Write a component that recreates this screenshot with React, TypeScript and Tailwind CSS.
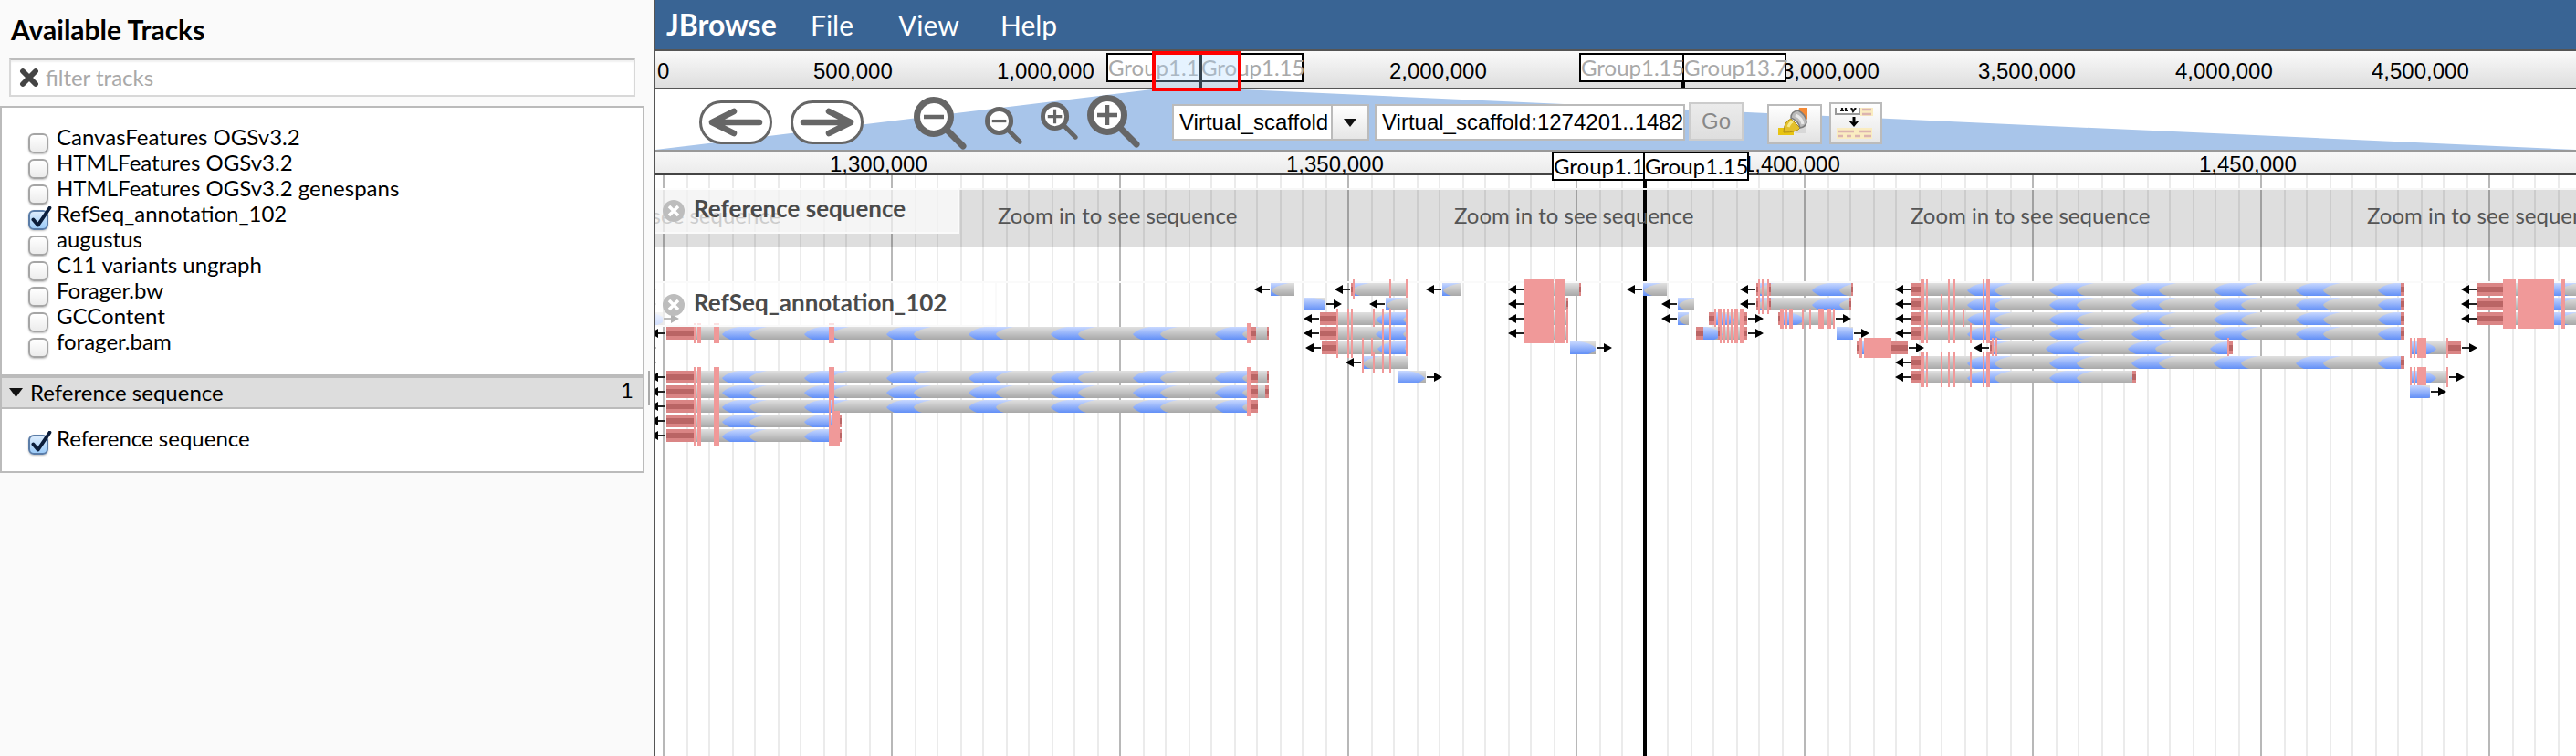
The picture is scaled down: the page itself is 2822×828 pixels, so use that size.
import React, { useState } from "react";
import { X } from "lucide-react";

type Span = [number, number];
type Feature = { row: number; x: Span; dir: "L" | "R"; utr?: Span[]; cds?: Span[] };

const ORIGIN = 718;
const TOP = 300;

const longCds = (...extra: Span[]): Span[] => [
  [760, 762], [764, 768], [782, 788], ...extra,
];
const midCds: Span[] = [[1464, 1466], [1476, 1478], [1480, 1482], [1514, 1516], [1522, 1524], [1540, 1542]];
const blockCds: Span[] = [[1670, 1702], [1704, 1714]];
const farCds: Span[] = [[2104, 2108], [2110, 2112], [2134, 2136], [2140, 2142], [2172, 2174], [2176, 2180]];
const tailCds: Span[] = [[2640, 2642], [2644, 2646], [2648, 2658], [2680, 2682]];
const edgeCds: Span[] = [[2742, 2756], [2758, 2798], [2806, 2810]];

const features: Feature[] = [
  { row: 0, x: [620, 701], dir: "R" },
  { row: 0, x: [1392, 1418], dir: "L" },
  { row: 0, x: [1480, 1542], dir: "L", utr: [[1480, 1482]], cds: [[1482, 1484], [1522, 1524], [1540, 1542]] },
  { row: 0, x: [1580, 1600], dir: "L" },
  { row: 0, x: [1670, 1732], dir: "L", cds: blockCds, utr: [[1730, 1732]] },
  { row: 0, x: [1800, 1826], dir: "L" },
  { row: 0, x: [1924, 2030], dir: "L", utr: [[1924, 1926], [1938, 1940], [2028, 2030]], cds: [[1926, 1928], [1930, 1932], [1936, 1938]] },
  { row: 0, x: [2094, 2634], dir: "L", utr: [[2094, 2104], [2630, 2634]], cds: farCds },
  { row: 0, x: [2714, 2840], dir: "L", utr: [[2714, 2742]], cds: edgeCds },
  { row: 1, x: [620, 701], dir: "R" },
  { row: 1, x: [1428, 1452], dir: "R" },
  { row: 1, x: [1518, 1542], dir: "L" },
  { row: 1, x: [1670, 1718], dir: "L", cds: blockCds, utr: [[1716, 1718]] },
  { row: 1, x: [1838, 1856], dir: "L" },
  { row: 1, x: [1924, 2028], dir: "L", utr: [[1924, 1926], [1938, 1940], [2026, 2028]], cds: [[1926, 1928], [1930, 1932], [1936, 1938]] },
  { row: 1, x: [2094, 2634], dir: "L", utr: [[2094, 2104], [2630, 2634]], cds: [...farCds, [2126, 2128]] },
  { row: 1, x: [2714, 2840], dir: "L", utr: [[2714, 2742]], cds: edgeCds },
  { row: 2, x: [700, 726], dir: "R" },
  { row: 2, x: [1446, 1542], dir: "L", utr: [[1446, 1464]], cds: [...midCds, [1504, 1506]] },
  { row: 2, x: [1670, 1718], dir: "L", cds: [...blockCds, [1716, 1718]] },
  { row: 2, x: [1838, 1850], dir: "L" },
  { row: 2, x: [1872, 1914], dir: "R", utr: [[1872, 1878], [1910, 1914]], cds: [[1878, 1880], [1882, 1886], [1888, 1890], [1892, 1894], [1896, 1898], [1900, 1904], [1906, 1910]] },
  { row: 2, x: [1948, 2010], dir: "R", utr: [[1948, 1950]], cds: [[1950, 1954], [1956, 1958], [1960, 1964], [1974, 1976], [1982, 1984], [1992, 1998], [2002, 2006], [2008, 2010]] },
  { row: 2, x: [2094, 2634], dir: "L", utr: [[2094, 2104], [2630, 2634]], cds: [...farCds, [2126, 2128], [2150, 2152]] },
  { row: 2, x: [2714, 2840], dir: "L", utr: [[2714, 2742]], cds: edgeCds },
  { row: 3, x: [730, 1390], dir: "L", utr: [[730, 760], [1370, 1376], [1388, 1390]], cds: longCds([908, 914], [1366, 1370]) },
  { row: 3, x: [1446, 1542], dir: "L", utr: [[1446, 1464]], cds: midCds },
  { row: 3, x: [1670, 1718], dir: "L", cds: [...blockCds, [1716, 1718]] },
  { row: 3, x: [1858, 1914], dir: "R", utr: [[1858, 1866], [1882, 1884], [1910, 1914]], cds: [[1884, 1886], [1888, 1890], [1892, 1894], [1896, 1898], [1900, 1904], [1906, 1910]] },
  { row: 3, x: [2012, 2030], dir: "R" },
  { row: 3, x: [2094, 2634], dir: "L", utr: [[2094, 2104], [2630, 2634]], cds: [...farCds, [2158, 2160]] },
  { row: 4, x: [620, 701], dir: "R" },
  { row: 4, x: [1448, 1542], dir: "L", utr: [[1448, 1464]], cds: [...midCds, [1492, 1494], [1502, 1504]] },
  { row: 4, x: [1720, 1748], dir: "R" },
  { row: 4, x: [2034, 2090], dir: "R", utr: [[2034, 2036], [2072, 2090]], cds: [[2036, 2040], [2042, 2072]] },
  { row: 4, x: [2180, 2446], dir: "L", utr: [[2180, 2182], [2442, 2446]], cds: [[2182, 2184], [2186, 2188], [2440, 2442]] },
  { row: 4, x: [2640, 2696], dir: "R", utr: [[2682, 2696]], cds: tailCds },
  { row: 5, x: [620, 701], dir: "R" },
  { row: 5, x: [1492, 1542], dir: "L", cds: [[1492, 1494], [1504, 1506], [1514, 1516], [1522, 1524]] },
  { row: 5, x: [2094, 2634], dir: "L", utr: [[2094, 2104], [2630, 2634]], cds: [...farCds, [2126, 2128], [2158, 2160]] },
  { row: 6, x: [730, 1390], dir: "L", utr: [[730, 760], [1370, 1378], [1388, 1390]], cds: longCds([908, 914], [1366, 1370]) },
  { row: 6, x: [1532, 1562], dir: "R" },
  { row: 6, x: [2094, 2340], dir: "L", utr: [[2094, 2104], [2336, 2340]], cds: [...farCds, [2126, 2128], [2158, 2160]] },
  { row: 6, x: [2640, 2682], dir: "R", cds: tailCds },
  { row: 7, x: [730, 1390], dir: "L", utr: [[730, 760], [1370, 1378], [1386, 1390]], cds: longCds([908, 914], [1366, 1370]) },
  { row: 7, x: [2640, 2662], dir: "R" },
  { row: 8, x: [730, 1378], dir: "L", utr: [[730, 760], [1370, 1378]], cds: longCds([908, 910], [912, 914], [1366, 1370]) },
  { row: 9, x: [730, 922], dir: "L", utr: [[730, 760], [920, 922]], cds: longCds([908, 910], [912, 920]) },
  { row: 10, x: [730, 922], dir: "L", utr: [[730, 760], [920, 922]], cds: longCds([908, 920]) },
];

function FeatureGlyph({ row, x: [a, b], dir, utr = [], cds = [] }: Feature) {
  const y = 310 + row * 16 - TOP;
  const left = a - ORIGIN;
  const right = b - ORIGIN;
  return (
    <g>
      <svg x={left} y={y} width={b - a} height={14} overflow="hidden">
        <rect width={b - a} height={14} fill={dir === "L" ? "url(#bodyLeft)" : "url(#bodyRight)"} />
      </svg>
      {dir === "L" ? (
        <use href="#arrow" transform={`translate(${left - 18} ${y + 7})`} />
      ) : (
        <use href="#arrow" transform={`translate(${right + 18} ${y + 7}) scale(-1 1)`} />
      )}
      <g transform={`translate(${-ORIGIN} 0)`}>
        {utr.map(([s, e]) => (
          <g key={s}>
            <rect x={s} y={y} width={e - s} height={14} fill="#da8585" />
            <rect x={s} y={y + 4} width={e - s} height={6} fill="#ba6565" />
          </g>
        ))}
        {cds.map(([s, e]) => (
          <rect key={s} x={s} y={y - 4} width={e - s} height={22} fill="#f09999" />
        ))}
      </g>
    </g>
  );
}

function ChevronStrip({ id, start, mirrored }: { id: string; start: number; mirrored?: boolean }) {
  const shape = "M0 8Q5 2 18 0H49Q33 3 30 8Q32 12 39 14H9Q2 11 0 8Z";
  return (
    <g id={id}>
      <rect width={720} height={14} fill="url(#gray)" />
      {Array.from({ length: 9 }, (_, k) => start + 90 * (k - 1)).map((x) => (
        <path key={x} d={shape} fill="url(#blue)" transform={`translate(${x} 0)${mirrored ? " scale(-1 1)" : ""}`} />
      ))}
    </g>
  );
}

function FeatureCanvas() {
  return (
    <svg className="absolute -top-2.5 left-0 h-[200px] w-full" aria-hidden="true">
      <defs>
        <linearGradient id="gray" x1="0" y1="0" x2="0" y2="1">
          <stop offset="0" stopColor="#e0e0e0" />
          <stop offset="1" stopColor="#a8a8a8" />
        </linearGradient>
        <linearGradient id="blue" x1="0" y1="0" x2="0" y2="1">
          <stop offset="0" stopColor="#c8d8ff" />
          <stop offset="1" stopColor="#628ff6" />
        </linearGradient>
        <pattern id="bodyLeft" width="720" height="14" patternUnits="userSpaceOnUse">
          <ChevronStrip id="stripLeft" start={61} />
        </pattern>
        <pattern id="bodyRight" width="720" height="14" patternUnits="userSpaceOnUse">
          <ChevronStrip id="stripRight" start={119} mirrored />
        </pattern>
        <g id="arrow">
          <rect x="6" y="-1" width="11" height="2" fill="#222" />
          <path d="M0 0L9 -5V-2.5L7.500 0L9 2.500V5Z" fill="#000" />
          <path d="M2 0L9 -4V4Z" fill="#000" />
        </g>
      </defs>
      {features.map((f) => (
        <FeatureGlyph key={`${f.row}-${f.x[0]}`} {...f} />
      ))}
    </svg>
  );
}

function Grid() {
  return (
    <svg className="absolute inset-0 h-full w-full" aria-hidden="true">
      <defs>
        <pattern id="grid" x="8" width="250" height="20" patternUnits="userSpaceOnUse">
          <rect width="2" height="20" fill="#b8b8b8" />
          {[26, 50, 76, 100, 126, 150, 176, 200, 226].map((x) => (
            <rect key={x} x={x} width="2" height="20" fill="#ebebeb" />
          ))}
        </pattern>
      </defs>
      <rect width="100%" height="100%" fill="url(#grid)" />
      <rect x="1082" width="4" height="100%" fill="#000" />
    </svg>
  );
}

function TrackCheckbox({ name, checked = false }: { name: string; checked?: boolean }) {
  const [on, setOn] = useState(checked);
  return (
    <label className="flex h-7 items-start gap-[9px] text-2xl leading-7">
      <span className="relative mt-2.5 block size-[22px] shrink-0">
        <input
          type="checkbox"
          checked={on}
          onChange={() => setOn(!on)}
          className="block size-[22px] appearance-none rounded-[6px] border-2 border-[#a5a5a5] bg-linear-to-b from-white to-[#ececec] shadow-[0_1px_2px_rgba(0,0,0,0.25)] checked:border-[#5b7da8] checked:from-[#dcecfc] checked:to-[#9ccbf8]"
        />
        {on && (
          <svg viewBox="0 0 28 28" className="pointer-events-none absolute -top-1 left-0.5 size-6" aria-hidden="true">
            <path d="M4 17L10 24L25 2" fill="none" stroke="#0b1d3a" strokeWidth="4.500" strokeLinecap="round" strokeLinejoin="round" />
          </svg>
        )}
      </span>
      <span className="whitespace-nowrap">{name}</span>
    </label>
  );
}

function Sidebar() {
  const tracks = [
    "CanvasFeatures OGSv3.2", "HTMLFeatures OGSv3.2", "HTMLFeatures OGSv3.2 genespans", "RefSeq_annotation_102",
    "augustus", "C11 variants ungraph", "Forager.bw", "GCContent", "forager.bam",
  ];
  return (
    <aside className="relative w-[716px] shrink-0 bg-[#fafafa] pr-2.5">
      <h1 className="px-3 pt-4 text-[30px] leading-8 font-bold">Available Tracks</h1>
      <div className="mt-4 mr-2.5 ml-2.5 flex h-[42px] items-center gap-1 border-2 border-[#d8d8d8] border-t-[#bcbcbc] bg-white pl-1.5 shadow-[inset_0_2px_2px_rgba(0,0,0,0.06)]">
        <button aria-label="Clear filter" className="text-[#444]">
          <X className="size-7" strokeWidth={5} />
        </button>
        <input aria-label="Filter tracks" placeholder="filter tracks" className="min-w-0 flex-1 bg-transparent text-2xl outline-none placeholder:text-[#a9a9a9]" />
      </div>
      <section className="mt-2.5 border-2 border-[#bbb] bg-white pt-[18px] pb-[22px] pl-[29px]">
        {tracks.map((t) => (
          <TrackCheckbox key={t} name={t} checked={t === "RefSeq_annotation_102"} />
        ))}
      </section>
      <section className="border-2 border-[#bbb] bg-white">
        <h2 className="flex h-[34px] items-center justify-between border-b-2 border-[#bbb] bg-[#ddd] pr-2.5 pl-2 text-2xl">
          <button className="flex items-center gap-2">
            <svg viewBox="0 0 15 10" className="h-2.5 w-[15px]" aria-hidden="true"><path d="M0 0H15L7.500 10Z" fill="#111" /></svg>
            Reference sequence
          </button>
          <span className="pb-1.5">1</span>
        </h2>
        <div className="pt-[18px] pb-[22px] pl-[29px]">
          <TrackCheckbox name="Reference sequence" checked />
        </div>
      </section>
      <div className="absolute top-[406px] right-1 h-[38px] w-0.5 bg-[#aaa]" />
    </aside>
  );
}

function RulerLabel({ x, text }: { x: number; text: string }) {
  return (
    <span className="absolute bottom-0 font-['Liberation_Sans',Arial,sans-serif] text-2xl leading-6" style={{ left: x - ORIGIN }}>
      {text}
    </span>
  );
}

function ScaffoldPair({ x, names, widths, dim }: { x: number; names: [string, string]; widths: [number, number]; dim?: boolean }) {
  return (
    <div
      className={`absolute top-0 flex h-8 border-2 border-black bg-white text-2xl leading-7 whitespace-nowrap ${dim ? "text-[#a9a9a9]" : "text-black"}`}
      style={{ left: x - ORIGIN }}
    >
      <span className="border-r-2 border-black" style={{ width: widths[0] }}>{names[0]}</span>
      <span style={{ width: widths[1] }}>{names[1]}</span>
    </div>
  );
}

function Overview() {
  const labels: [number, string][] = [
    [720, "0"], [891, "500,000"], [1092, "1,000,000"], [1522, "2,000,000"], [1952, "3,000,000"],
    [2167, "3,500,000"], [2383, "4,000,000"], [2598, "4,500,000"],
  ];
  return (
    <div className="relative h-[42px] shrink-0 border-b-2 border-[#555] bg-linear-to-b from-[#fafafa] to-[#dedede]">
      <div className="absolute inset-x-0 bottom-1.5">
        {labels.map(([x, t]) => <RulerLabel key={t} x={x} text={t} />)}
      </div>
      <div className="absolute inset-x-0 top-0.5">
        <ScaffoldPair x={1212} names={["Group1.1", "Group1.15"]} widths={[102, 110]} dim />
        <ScaffoldPair x={1730} names={["Group1.15", "Group13.7"]} widths={[113, 110]} dim />
      </div>
      <div className="absolute top-0.5 left-[595px] h-[38px] w-1 bg-black" />
      <div className="absolute bottom-0 left-[1124px] h-1.5 w-1 bg-black" />
      <div className="absolute top-0 left-[544px] z-10 h-11 w-[98px] border-4 border-[#f00] bg-[#add7ff]/30" />
    </div>
  );
}

function Magnifier({ sign, big }: { sign: "plus" | "minus"; big?: boolean }) {
  return (
    <button aria-label={`Zoom ${sign === "plus" ? "in" : "out"}${big ? " a lot" : ""}`}>
      <svg viewBox="0 0 58 58" className={big ? "size-[58px]" : "size-[41px]"} aria-hidden="true">
        <path d="M36 36L54 54" stroke="#666" strokeWidth="7" strokeLinecap="round" />
        <circle cx="22" cy="22" r="18.500" fill="#fff" stroke="#666" strokeWidth="7" />
        <path d={sign === "plus" ? "M11 22H33M22 11V33" : "M11 22H33"} stroke="#666" strokeWidth="4.500" />
      </svg>
    </button>
  );
}

function PanButton({ flip }: { flip?: boolean }) {
  return (
    <button aria-label={flip ? "Pan right" : "Pan left"}>
      <svg viewBox="0 0 80 48" className={`h-12 w-20 ${flip ? "-scale-x-100" : ""}`} aria-hidden="true">
        <rect x="1.500" y="1.500" width="77" height="45" rx="22.500" fill="#fff" stroke="#666" strokeWidth="3" />
        <path d="M14 24H66M38 12L14 24L38 36" fill="none" stroke="#666" strokeWidth="6.500" strokeLinecap="round" strokeLinejoin="round" />
      </svg>
    </button>
  );
}

function Toolbar() {
  return (
    <div className="relative h-[68px] shrink-0 border-b-2 border-[#999] bg-white font-['Liberation_Sans',Arial,sans-serif] text-2xl">
      <svg viewBox="0 0 2104 66" preserveAspectRatio="none" className="absolute inset-0 h-full w-full" aria-hidden="true">
        <path d="M0 66L544 0H642L2104 66Z" fill="#a8c5ea" />
      </svg>
      <div className="relative flex items-start pt-3 pl-12">
        <div className="flex gap-5">
          <PanButton />
          <PanButton flip />
        </div>
        <div className="-mt-2 ml-[55px] flex">
          <div className="pt-1"><Magnifier sign="minus" big /></div>
          <div className="ml-5 pt-[15px]"><Magnifier sign="minus" /></div>
          <div className="ml-5 pt-2.5"><Magnifier sign="plus" /></div>
          <div className="ml-2.5 pt-0.5"><Magnifier sign="plus" big /></div>
        </div>
        <div className="relative mt-1 ml-[35px] h-10 w-[216px] border-2 border-[#bbb] bg-white">
          <select aria-label="Reference sequence" className="h-full w-full appearance-none bg-transparent pl-1.5 outline-none">
            <option>Virtual_scaffold</option>
          </select>
          <span className="pointer-events-none absolute inset-y-0 right-0 flex w-10 items-center justify-center border-l-2 border-[#bbb] bg-linear-to-b from-white to-[#e6e6e6]">
            <svg viewBox="0 0 14 9" className="h-[9px] w-3.5" aria-hidden="true"><path d="M0 0H14L7 9Z" fill="#111" /></svg>
          </span>
        </div>
        <input aria-label="Location" defaultValue="Virtual_scaffold:1274201..1482" className="mt-1 ml-1.5 h-10 w-[340px] border-2 border-[#bbb] bg-white pl-1.5 outline-none" />
        <button className="mt-0.5 ml-1 h-[42px] w-[60px] border-2 border-[#ccc] bg-linear-to-b from-[#ebebeb] to-[#dedede] text-[#888]">Go</button>
        <button aria-label="Highlight a region" className="mt-1 ml-[26px] h-11 w-[60px] border-2 border-[#bbb] bg-linear-to-b from-white to-[#e2e2e2]">
          <svg viewBox="0 0 32 32" className="ml-2.5 -mt-1 size-8" aria-hidden="true">
            <path d="M20 24L31 14V28H18Z" fill="#ccc" opacity=".6" />
            <path d="M0 22H17V30H0Z" fill="#e8c412" />
            <path d="M6 27Q6 15 14 12L24 22Q21 27 6 27Z" fill="#e3c02c" stroke="#b08e14" />
            <path d="M11 21Q13 16 16 15" fill="none" stroke="#f7e98a" strokeWidth="3" />
            <path d="M23 0H32V13L22 4Z" fill="#f58a35" />
            <path d="M14 11Q14 4 22 3Q31 8 31 16Q30 21 24 22Q22 14 14 11Z" fill="#bbb" stroke="#7d7d7d" strokeWidth="1.500" />
            <path d="M19 8Q26 11 27 18" fill="none" stroke="#e9e9e9" strokeWidth="3" />
          </svg>
        </button>
        <button aria-label="Show track label" className="mt-0.5 ml-2 h-[46px] w-[58px] border-2 border-[#bbb] bg-linear-to-b from-white to-[#e6e6e6]">
          <svg viewBox="0 0 42 34" className="ml-1 h-[34px] w-[42px]" aria-hidden="true">
            <path d="M28 0H42V9H28ZM2 22H41V34H2Z" fill="#faecc0" />
            <path d="M30 2H40M30 7H40M4 26H21M26 26H40M4 31H9M13 31H18M22 31H28M32 31H40" stroke="#dcb4b0" strokeWidth="2.500" />
            <path d="M1 0V7H27V0" fill="#fff" stroke="#999" strokeWidth="2" />
            <path d="M6 3H10M8 0V3M12 0V3H15M18 0L20 4L23 0" stroke="#111" strokeWidth="2.200" fill="none" />
            <path d="M21 10V16" stroke="#000" strokeWidth="3" />
            <path d="M15 14L21 16L27 14L21 21Z" fill="#000" />
          </svg>
        </button>
      </div>
    </div>
  );
}

function TrackLabel({ name, wide }: { name: string; wide?: boolean }) {
  return (
    <div className={`absolute -top-0.5 left-0 flex h-[50px] items-center gap-2.5 border-r-2 border-b-2 border-[#fafafa] bg-white/70 pb-1 pl-2 text-[26px] font-bold text-[#4a4a4a] ${wide ? "w-[374px] border-t-2 border-[#f3f3f3]" : "w-[333px]"}`}>
      <button aria-label={`Close ${name}`} className="mt-1.5">
        <svg viewBox="0 0 24 24" className="size-6" aria-hidden="true">
          <circle cx="12" cy="12" r="12" fill="#bdbdbd" />
          <path d="M7 7L17 17M17 7L7 17" stroke="#fff" strokeWidth="3.500" />
        </svg>
      </button>
      <span className="whitespace-nowrap">{name}</span>
    </div>
  );
}

function TrackView() {
  const labels: [number, string][] = [[909, "1,300,000"], [1409, "1,350,000"], [1909, "1,400,000"], [2409, "1,450,000"]];
  return (
    <>
      <div className="relative z-10 h-[26px] shrink-0 border-b-2 border-[#444] bg-linear-to-b from-[#f8f8f8] to-[#ebebeb]">
        <div className="absolute inset-x-0 -bottom-0.5">
          {labels.map(([x, t]) => <RulerLabel key={t} x={x} text={t} />)}
        </div>
        <ScaffoldPair x={1700} names={["Group1.1", "Group1.15"]} widths={[100, 112]} />
      </div>
      <div className="relative flex-1 overflow-hidden bg-white">
        <Grid />
        <section className="relative mt-3.5 h-16 border-t-2 border-[#f7f7f7] bg-black/13">
          {[593, 1093, 1593, 2093, 2593].map((x) => (
            <span key={x} className="absolute top-3 text-2xl leading-8 whitespace-nowrap text-[#555]" style={{ left: x - ORIGIN }}>
              Zoom in to see sequence
            </span>
          ))}
          <TrackLabel name="Reference sequence" />
        </section>
        <section className="relative mt-[38px] border-t-2 border-[#fafafa]">
          <FeatureCanvas />
          <TrackLabel name="RefSeq_annotation_102" wide />
        </section>
      </div>
    </>
  );
}

export default function App() {
  return (
    <div className="flex min-h-screen overflow-hidden font-[Lato,'Open_Sans',sans-serif] text-black">
      <Sidebar />
      <main className="flex min-w-0 flex-1 flex-col border-l-2 border-[#555]">
        <nav className="flex h-14 shrink-0 items-center border-b-2 border-[#555] bg-[#396494] pl-3 text-[30px] text-white">
          <strong className="w-[158px] text-[32px]">JBrowse</strong>
          <button className="w-24 text-left">File</button>
          <button className="w-28 text-left">View</button>
          <button className="text-left">Help</button>
        </nav>
        <Overview />
        <Toolbar />
        <TrackView />
      </main>
    </div>
  );
}
